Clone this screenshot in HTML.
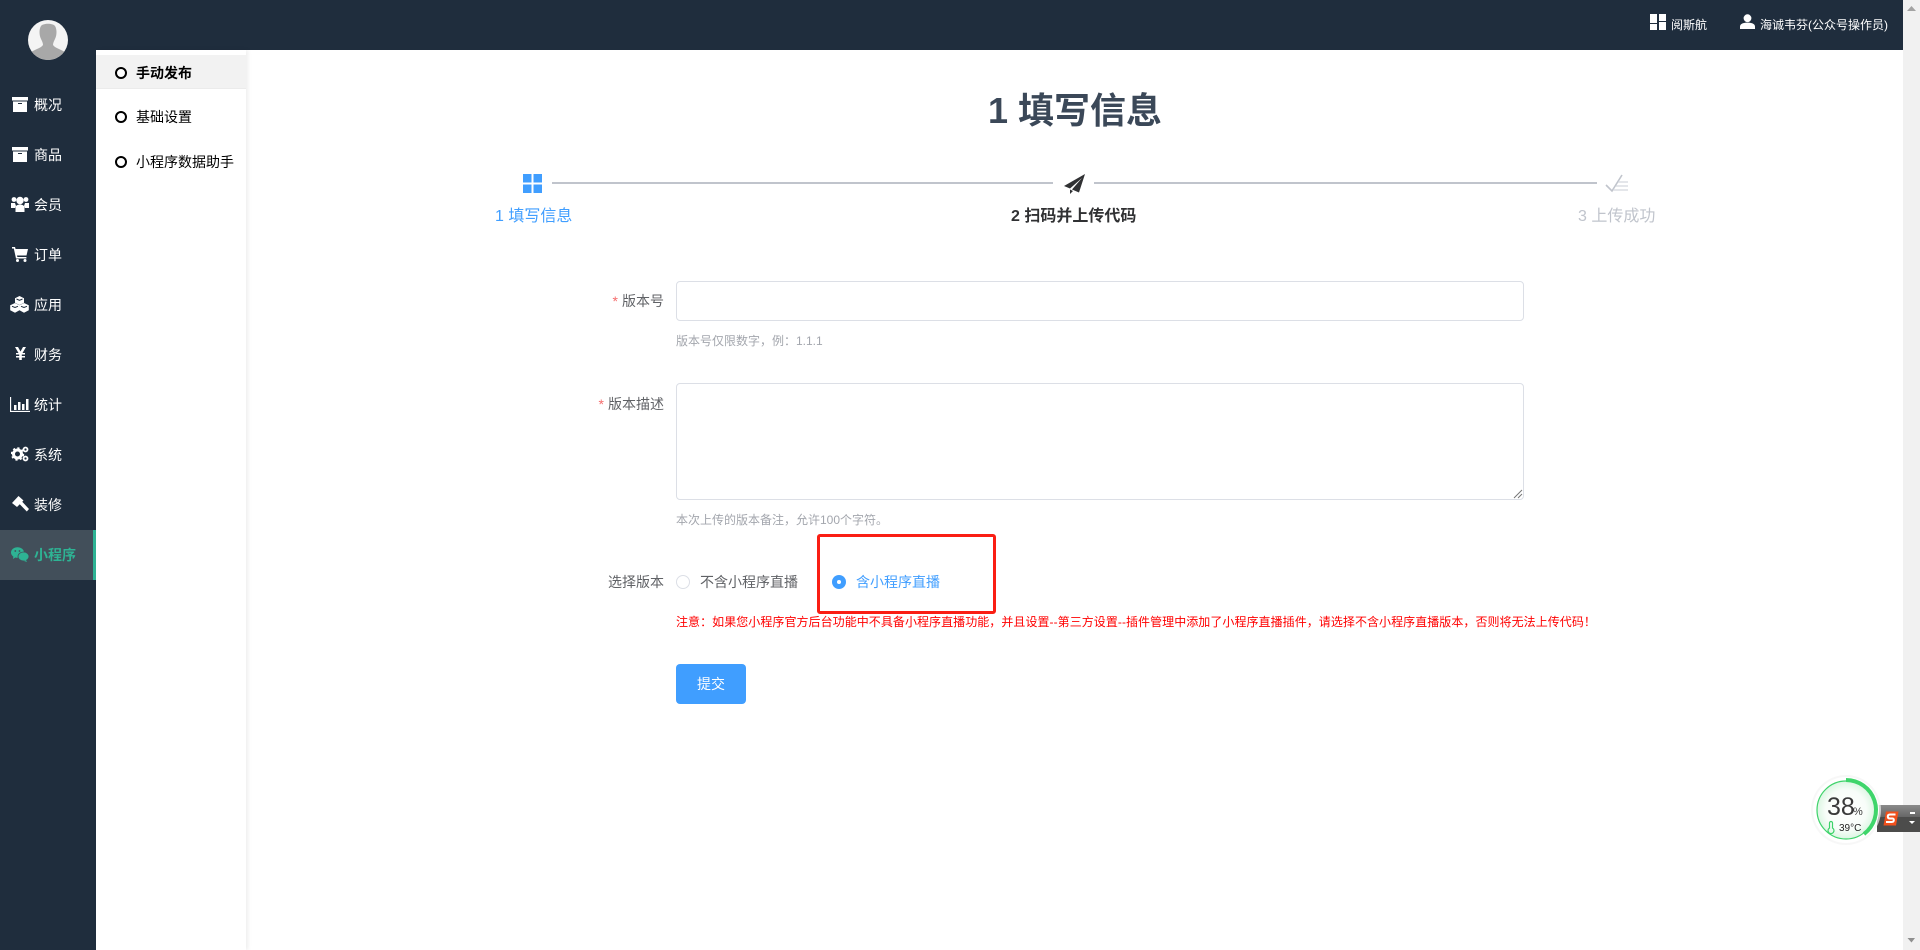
<!DOCTYPE html>
<html lang="zh-CN">
<head>
<meta charset="utf-8">
<title>小程序发布</title>
<style>
html,body{margin:0;padding:0;width:1920px;height:950px;overflow:hidden;background:#fff}
body{position:relative;font-family:"Liberation Sans","Noto Sans CJK SC",sans-serif;font-size:14px;color:#606266}
.a{position:absolute;white-space:nowrap}
.t{line-height:20px;height:20px}
svg{position:absolute;display:block}
.nav{left:34px;color:#fff;font-size:14px;width:60px}
.sub{left:136px;color:#000;font-size:14px}
.dot{position:absolute;left:115px;width:8px;height:8px;border:2px solid #000;border-radius:50%;background:#fff}
.lbl{right:1256px;font-size:14px;color:#606266}
.help{left:676px;font-size:12px;color:#a3a6ad}
</style>
</head>
<body>
<!-- scrollbar -->
<div class="a" style="left:1903px;top:0;width:17px;height:950px;background:#f1f1f1"></div>
<svg style="left:1907px;top:6px" width="9" height="6"><path d="M4.5 0L9 5H0z" fill="#a3a3a3"/></svg>
<svg style="left:1907px;top:938px" width="9" height="6"><path d="M0 0H7.5L4 4.5z" transform="translate(.5 0)" fill="#8f8f8f"/></svg>

<!-- header -->
<div class="a" style="left:0;top:0;width:1903px;height:50px;background:#1f2d3d"></div>
<svg style="left:1650px;top:14px" width="16" height="16"><path d="M0 0h7v16H0zM9 0h7v7H9zM9 8h7v8H9z" fill="#fff"/><rect x="0" y="9" width="7" height="1" fill="#1f2d3d"/></svg>
<div class="a t" style="left:1671px;top:15px;font-size:12px;color:#fff">阅斯航</div>
<svg style="left:1740px;top:14px" width="15" height="15"><circle cx="7.5" cy="4.2" r="3.9" fill="#fff"/><path d="M0 15v-2.500C0 9.800 3.500 8.600 7.500 8.600s7.500 1.200 7.500 3.900V15z" fill="#fff"/></svg>
<div class="a t" style="left:1760px;top:15px;font-size:12px;color:#fff">海诚韦芬(公众号操作员)</div>

<!-- sidebar -->
<div class="a" style="left:0;top:0;width:96px;height:950px;background:#1f2d3d"></div>
<svg style="left:28px;top:20px" width="40" height="40" viewBox="0 0 40 40">
<defs><clipPath id="c"><circle cx="20" cy="20" r="20"/></clipPath></defs>
<circle cx="20" cy="20" r="20" fill="#f4f4f4"/>
<g clip-path="url(#c)"><path d="M13 6c2-3 12-3 14 0 2 3 2 9 0 13-1 2-2 4-2 6 2 3 7 4 12 7v10H3V32c5-3 10-4 12-7 0-2-1-4-2-6-2-4-2-10 0-13z" fill="#a8a8a8"/></g>
</svg>

<!-- nav icons -->
<svg style="left:12px;top:97px" width="16" height="15"><path d="M0 0h16v3.500H0zM1 4.500h14V15H1z" fill="#fff"/><rect x="6" y="6" width="4" height="1" fill="#1f2d3d"/></svg>
<svg style="left:12px;top:147px" width="16" height="15"><path d="M0 0h16v3.500H0zM1 4.500h14V15H1z" fill="#fff"/><rect x="6" y="6" width="4" height="1" fill="#1f2d3d"/></svg>
<svg style="left:11px;top:196px" width="18" height="16"><circle cx="9" cy="4.500" r="3.700" fill="#fff"/><circle cx="3" cy="3.500" r="2.400" fill="#fff"/><circle cx="15" cy="3.500" r="2.400" fill="#fff"/><path d="M0 7h4l1 3-1 2H0zM18 7h-4l-1 3 1 2h4z" fill="#fff"/><path d="M4.500 16v-4c0-2.500 2-3.500 4.500-3.500s4.500 1 4.500 3.500v4z" fill="#fff"/></svg>
<svg style="left:12px;top:247px" width="16" height="15"><path d="M0 0h3l.6 2H16l-1.500 6.500H5l.4 1.500h9v1.500H4L1.800 1.500H0z" fill="#fff"/><circle cx="5.500" cy="13.500" r="1.500" fill="#fff"/><circle cx="13" cy="13.500" r="1.500" fill="#fff"/></svg>
<svg style="left:10px;top:296px" width="19" height="17"><path d="M9.500 0l4.500 2.200v4.600L9.500 9 5 6.800V2.200z" fill="#fff"/><path d="M5 7l4.500 2.300v4.900L5 16.800.2 14.200V9.300z" fill="#fff"/><path d="M14 7l4.800 2.300v4.900L14 16.800 9.500 14.200V9.300z" fill="#fff"/><path d="M6.500 3l3 1.300 3-1.300M2 10.300l3 1.200 3-1.200M11 10.300l3 1.200 3-1.200" stroke="#1f2d3d" stroke-width="1" fill="none"/></svg>
<svg style="left:15px;top:347px" width="11" height="13"><path d="M0 0h3l2.500 4.500L8 0h3L7.500 6H10v1.500H6.800V9H10v1.500H6.800V13H4.200v-2.500H1V9h3.200V7.500H1V6h2.500z" fill="#fff"/></svg>
<svg style="left:10px;top:397px" width="20" height="15"><path d="M.5 0v14.500H20" stroke="#fff" stroke-width="1.300" fill="none"/><rect x="4" y="8" width="2.500" height="5" fill="#fff"/><rect x="8" y="5" width="2.500" height="8" fill="#fff"/><rect x="12" y="7" width="2.500" height="6" fill="#fff"/><rect x="16" y="2" width="2.500" height="11" fill="#fff"/></svg>
<svg style="left:11px;top:446px" width="18" height="16"><circle cx="6.500" cy="8" r="4" fill="none" stroke="#fff" stroke-width="3"/><circle cx="6.500" cy="8" r="5.800" fill="none" stroke="#fff" stroke-width="1.800" stroke-dasharray="2.200 2.300"/><circle cx="14.500" cy="3.500" r="2" fill="none" stroke="#fff" stroke-width="1.800"/><circle cx="14.500" cy="12.500" r="2" fill="none" stroke="#fff" stroke-width="1.800"/></svg>
<svg style="left:12px;top:496px" width="17" height="16"><path d="M0 7L6.500 0l5 4.500L5 11z" fill="#fff"/><path d="M7.500 8l2.500-2.500 7 7.500-2.200 2.500z" fill="#fff"/></svg>

<div class="a nav t" style="top:95px">概况</div>
<div class="a nav t" style="top:145px">商品</div>
<div class="a nav t" style="top:195px">会员</div>
<div class="a nav t" style="top:245px">订单</div>
<div class="a nav t" style="top:295px">应用</div>
<div class="a nav t" style="top:345px">财务</div>
<div class="a nav t" style="top:395px">统计</div>
<div class="a nav t" style="top:445px">系统</div>
<div class="a nav t" style="top:495px">装修</div>

<div class="a" style="left:0;top:530px;width:93px;height:50px;background:#424f5a"></div>
<div class="a" style="left:93px;top:530px;width:3px;height:50px;background:#2eb394"></div>
<svg style="left:11px;top:547px" width="18" height="15"><ellipse cx="6.500" cy="5.500" rx="6.500" ry="5.300" fill="#2eb394"/><path d="M2.500 9l-.5 3 3-2z" fill="#2eb394"/><ellipse cx="12.500" cy="9.500" rx="5.500" ry="4.500" fill="#2eb394" stroke="#424f5a" stroke-width=".8"/><path d="M15 13l1 2-3-1z" fill="#2eb394"/><circle cx="4.300" cy="4" r=".9" fill="#424f5a"/><circle cx="8.500" cy="4" r=".9" fill="#424f5a"/></svg>
<div class="a nav t" style="top:545px;color:#2eb394;font-weight:700">小程序</div>

<!-- sub nav -->
<div class="a" style="left:96px;top:50px;width:150px;height:900px;background:#fff;box-shadow:2px 0 4px rgba(0,0,0,.07)"></div>
<div class="a" style="left:96px;top:55px;width:150px;height:34px;background:#f2f2f2;border-bottom:1px solid #ebebeb;box-sizing:border-box"></div>
<div class="dot" style="top:67px"></div>
<div class="a sub t" style="top:63px;font-weight:700">手动发布</div>
<div class="dot" style="top:111px"></div>
<div class="a sub t" style="top:107px">基础设置</div>
<div class="dot" style="top:156px"></div>
<div class="a sub t" style="top:152px">小程序数据助手</div>

<!-- title -->
<div class="a" style="left:988px;top:90px;font-size:36px;line-height:42px;font-weight:700;color:#3b4858">1 填写信息</div>

<!-- steps -->
<svg style="left:523px;top:174px" width="19" height="19"><rect width="8.500" height="8.500" fill="#409eff"/><rect x="10.500" width="8.500" height="8.500" fill="#409eff"/><rect y="10.500" width="8.500" height="8.500" fill="#409eff"/><rect x="10.500" y="10.500" width="8.500" height="8.500" fill="#409eff"/></svg>
<div class="a" style="left:552px;top:182px;width:501px;height:2px;background:#c0c4cc"></div>
<svg style="left:1064px;top:174px" width="21" height="20"><path d="M21 0L0 12l6 2.500L18 4 8 15.500l7 3z" fill="#303133"/><path d="M6 15.500V20l3-3z" fill="#303133"/></svg>
<div class="a" style="left:1094px;top:182px;width:503px;height:2px;background:#c0c4cc"></div>
<svg style="left:1605px;top:174px" width="24" height="20"><path d="M1 11l6 6L17 1" fill="none" stroke="#c0c4cc" stroke-width="1.600"/><path d="M13 8h10M11 12h12M8 16h15" stroke="#d3d6dd" stroke-width="1.300"/></svg>
<div class="a" style="left:495px;top:206px;font-size:16px;line-height:22px;color:#409eff">1 填写信息</div>
<div class="a" style="left:1011px;top:206px;font-size:16px;line-height:22px;color:#303133;font-weight:700">2 扫码并上传代码</div>
<div class="a" style="left:1578px;top:206px;font-size:16px;line-height:22px;color:#c0c4cc">3 上传成功</div>

<!-- form -->
<div class="a lbl t" style="top:291px"><span style="color:#f56c6c;margin-right:4px">*</span>版本号</div>
<div class="a" style="left:676px;top:281px;width:848px;height:40px;border:1px solid #dcdfe6;border-radius:4px;box-sizing:border-box;background:#fff"></div>
<div class="a help t" style="top:331px">版本号仅限数字，例：1.1.1</div>

<div class="a lbl t" style="top:394px"><span style="color:#f56c6c;margin-right:4px">*</span>版本描述</div>
<div class="a" style="left:676px;top:383px;width:848px;height:117px;border:1px solid #dcdfe6;border-radius:4px;box-sizing:border-box;background:#fff"></div>
<svg style="left:1513px;top:489px" width="10" height="10"><path d="M9 1L1 9M9 5L5 9" stroke="#777" stroke-width="1"/></svg>
<div class="a help t" style="top:510px">本次上传的版本备注，允许100个字符。</div>

<div class="a lbl t" style="top:572px">选择版本</div>
<div class="a" style="left:676px;top:575px;width:14px;height:14px;border:1px solid #dcdfe6;border-radius:50%;box-sizing:border-box;background:#fff"></div>
<div class="a t" style="left:700px;top:572px;font-size:14px;color:#606266">不含小程序直播</div>
<div class="a" style="left:832px;top:575px;width:14px;height:14px;border-radius:50%;background:#409eff"></div>
<div class="a" style="left:837px;top:580px;width:4px;height:4px;border-radius:50%;background:#fff"></div>
<div class="a t" style="left:856px;top:572px;font-size:14px;color:#409eff">含小程序直播</div>
<div class="a" style="left:817px;top:534px;width:179px;height:80px;border:3px solid #fa1e14;border-radius:3px;box-sizing:border-box"></div>
<div class="a t" style="left:676px;top:612px;font-size:12px;color:#f00;letter-spacing:.05px">注意：如果您小程序官方后台功能中不具备小程序直播功能，并且设置--第三方设置--插件管理中添加了小程序直播插件，请选择不含小程序直播版本，否则将无法上传代码！</div>
<div class="a" style="left:676px;top:664px;width:70px;height:40px;border-radius:4px;background:#409eff;color:#fff;font-size:14px;line-height:40px;text-align:center">提交</div>

<!-- sogou bar -->
<div class="a" style="left:1877px;top:805px;width:43px;height:27px;background:#4c4c4b"></div>
<div class="a" style="left:1877px;top:805px;width:43px;height:12px;background:linear-gradient(#8a8a8a,#666)"></div>
<svg style="left:1883px;top:811px" width="16" height="15"><path d="M3 0.500H15.500L13 14.500H0.500z" rx="3" fill="#f1501c"/><path d="M12.500 3.500H7Q4.800 3.500 4.800 5.500T7 7.500H9.500Q11 7.500 10.800 9.300T8.500 11H3" fill="none" stroke="#fff" stroke-width="2"/></svg>
<div class="a" style="left:1910px;top:812px;width:5px;height:2px;background:#fff"></div>
<svg style="left:1909px;top:821px" width="6" height="4"><path d="M0 0h6L3 3z" fill="#fff"/></svg>

<!-- widget -->
<svg style="left:1810px;top:774px" width="72" height="72" viewBox="0 0 72 72">
<defs><radialGradient id="g" cx=".5" cy=".5" r=".5"><stop offset="0" stop-color="#fff"/><stop offset=".7" stop-color="#f8fdf9"/><stop offset="1" stop-color="#dcf6e3"/></radialGradient></defs>
<circle cx="36" cy="36" r="35" fill="#f4f4f4" opacity=".7"/>
<circle cx="36" cy="36" r="33" fill="#fff"/>
<circle cx="36" cy="36" r="29" fill="url(#g)" stroke="#3ed36a" stroke-width="1.200"/>
<path d="M36 6A30 30 0 0 1 54 60" fill="none" stroke="#3fd56b" stroke-width="4"/>
<text x="17" y="41" font-family="Liberation Sans,sans-serif" font-size="25" fill="#3a3a3a">38</text>
<text x="43" y="41" font-family="Liberation Sans,sans-serif" font-size="11" fill="#3a3a3a">%</text>
<path d="M19.500 49a1.500 1.500 0 0 1 3 0v5a3 3 0 1 1-3 0z" fill="none" stroke="#3ed36a" stroke-width="1.200"/>
<text x="29" y="57" font-family="Liberation Sans,sans-serif" font-size="10" fill="#222">39°C</text>
</svg>
</body>
</html>
